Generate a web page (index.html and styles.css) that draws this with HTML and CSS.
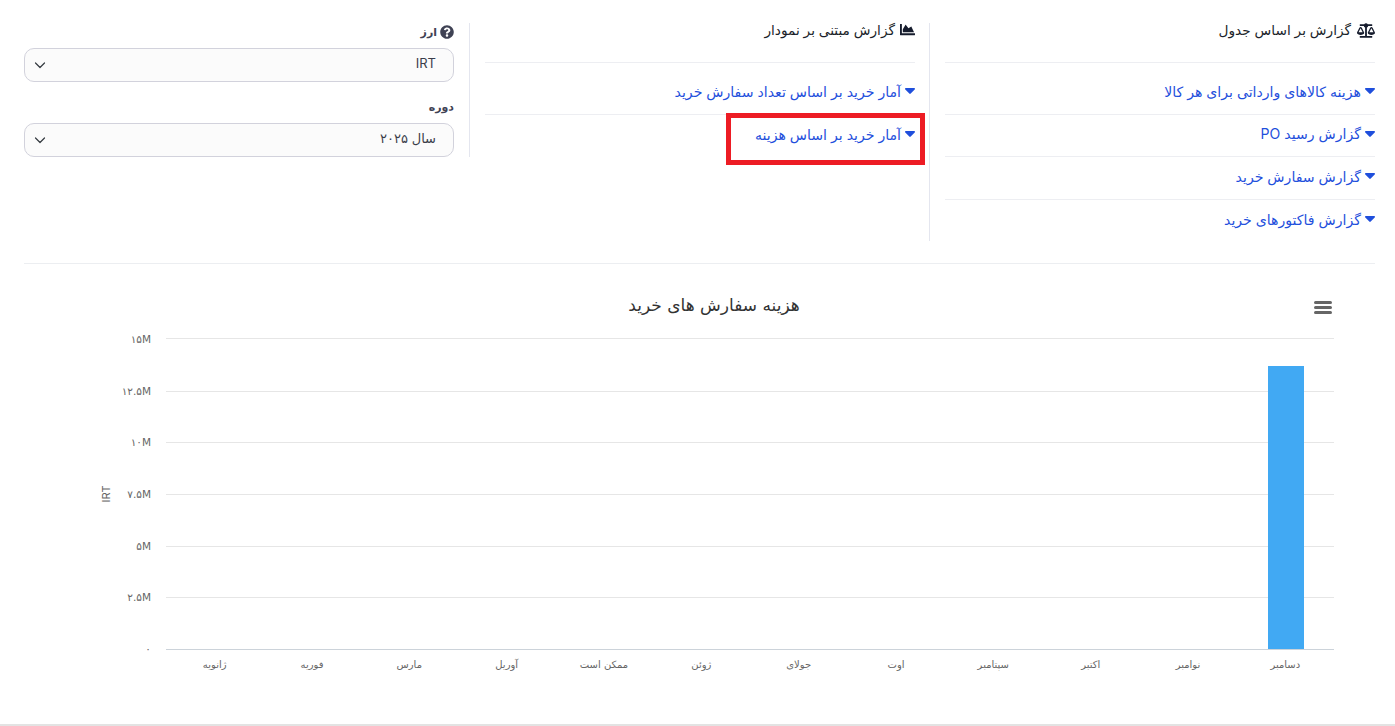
FILE: index.html
```html
<!DOCTYPE html>
<html lang="fa" dir="rtl">
<head>
<meta charset="utf-8">
<title>گزارش خرید</title>
<link rel="stylesheet" href="styles.css">
</head>
<body>
<main class="page">
  <section class="reports">
    <div class="col col-table">
      <h3 class="col-title">
        <svg class="title-icon scale" viewBox="0 0 640 512"><path d="M256 336h-.02c0-16.18 1.34-8.73-85.05-181.51-17.65-35.29-68.19-35.36-85.87 0C-2.06 328.75.02 320.33.02 336H0c0 44.18 57.31 80 128 80s128-35.82 128-80zM128 176l72 144H56l72-144zm511.98 160c0-16.18 1.34-8.73-85.05-181.51-17.65-35.29-68.19-35.36-85.87 0-87.12 174.26-85.04 165.84-85.04 181.51H384c0 44.18 57.31 80 128 80s128-35.82 128-80h-.02zM440 320l72-144 72 144H440zm88 128H352V153.25c23.51-10.29 41.16-31.48 46.39-57.25H528c8.84 0 16-7.16 16-16V48c0-8.84-7.16-16-16-16H383.64C369.04 12.68 346.09 0 320 0s-49.04 12.68-63.64 32H112c-8.84 0-16 7.16-16 16v32c0 8.84 7.16 16 16 16h129.61c5.23 25.76 22.87 46.96 46.39 57.25V448H112c-8.84 0-16 7.16-16 16v32c0 8.84 7.16 16 16 16h416c8.84 0 16-7.16 16-16v-32c0-8.84-7.16-16-16-16z"/></svg>
        <span>گزارش بر اساس جدول</span>
      </h3>
      <ul class="links">
        <li><svg class="caret" viewBox="0 0 10 6"><path d="M1 0h8c.9 0 1.3 1 .7 1.6L5.7 5.6c-.4.4-1 .4-1.4 0L.3 1.6C-.3 1 .1 0 1 0z"/></svg><a href="#">هزینه کالاهای وارداتی برای هر کالا</a></li>
        <li><svg class="caret" viewBox="0 0 10 6"><path d="M1 0h8c.9 0 1.3 1 .7 1.6L5.7 5.6c-.4.4-1 .4-1.4 0L.3 1.6C-.3 1 .1 0 1 0z"/></svg><a href="#">گزارش رسید PO</a></li>
        <li><svg class="caret" viewBox="0 0 10 6"><path d="M1 0h8c.9 0 1.3 1 .7 1.6L5.7 5.6c-.4.4-1 .4-1.4 0L.3 1.6C-.3 1 .1 0 1 0z"/></svg><a href="#">گزارش سفارش خرید</a></li>
        <li><svg class="caret" viewBox="0 0 10 6"><path d="M1 0h8c.9 0 1.3 1 .7 1.6L5.7 5.6c-.4.4-1 .4-1.4 0L.3 1.6C-.3 1 .1 0 1 0z"/></svg><a href="#">گزارش فاکتورهای خرید</a></li>
      </ul>
    </div>
    <div class="col col-chart">
      <h3 class="col-title">
        <svg class="title-icon area" viewBox="0 0 512 512"><path d="M500 384c6.6 0 12 5.4 12 12v40c0 6.6-5.4 12-12 12H12c-6.6 0-12-5.4-12-12V76c0-6.6 5.4-12 12-12h40c6.6 0 12 5.4 12 12v308h436zM372.7 159.5L288 216l-85.3-113.7c-5.1-6.8-15.5-6.3-19.9 1L96 248v104h384l-89.9-187.8c-3.2-6.5-11.4-8.7-17.4-4.7z"/></svg>
        <span>گزارش مبتنی بر نمودار</span>
      </h3>
      <ul class="links">
        <li><svg class="caret" viewBox="0 0 10 6"><path d="M1 0h8c.9 0 1.3 1 .7 1.6L5.7 5.6c-.4.4-1 .4-1.4 0L.3 1.6C-.3 1 .1 0 1 0z"/></svg><a href="#">آمار خرید بر اساس تعداد سفارش خرید</a></li>
        <li><svg class="caret" viewBox="0 0 10 6"><path d="M1 0h8c.9 0 1.3 1 .7 1.6L5.7 5.6c-.4.4-1 .4-1.4 0L.3 1.6C-.3 1 .1 0 1 0z"/></svg><a href="#">آمار خرید بر اساس هزینه</a></li>
      </ul>
      <div class="highlight"></div>
    </div>
    <div class="col col-filters">
      <label class="field-label">
        <svg class="help" viewBox="0 0 512 512"><path d="M504 256c0 136.997-111.043 248-248 248S8 392.997 8 256C8 119.083 119.043 8 256 8s248 111.083 248 248zM262.655 90c-54.497 0-89.255 22.957-116.549 63.758-3.536 5.286-2.353 12.415 2.715 16.258l34.699 26.31c5.205 3.947 12.621 3.008 16.665-2.122 17.864-22.658 30.113-35.797 57.303-35.797 20.429 0 45.698 13.148 45.698 32.958 0 14.976-12.363 22.667-32.534 33.976C247.128 238.528 216 254.941 216 296v4c0 6.627 5.373 12 12 12h56c6.627 0 12-5.373 12-12v-1.333c0-28.462 83.186-29.647 83.186-106.667 0-58.002-60.165-102-116.531-102zM256 338c-25.365 0-46 20.635-46 46 0 25.364 20.635 46 46 46s46-20.636 46-46c0-25.365-20.635-46-46-46z"/></svg>
        <span>ارز</span>
      </label>
      <div class="select">
        <span class="select-value">IRT</span>
        <svg class="chevron" viewBox="0 0 16 16"><path d="M3.5 6l4.5 4.5L12.5 6"/></svg>
      </div>
      <label class="field-label second"><span>دوره</span></label>
      <div class="select">
        <span class="select-value">سال ۲۰۲۵</span>
        <svg class="chevron" viewBox="0 0 16 16"><path d="M3.5 6l4.5 4.5L12.5 6"/></svg>
      </div>
    </div>
  </section>

  <hr class="divider">

  <svg class="chart" viewBox="0 264 1395 460">
    <text class="chart-title" x="714" y="311">هزینه سفارش های خرید</text>
    <path class="menu" d="M1315.5 302.5h15M1315.5 307.5h15M1315.5 312.5h15"/>
    <path class="grid" d="M166 338.5H1334M166 391.5H1334M166 442.5H1334M166 494.5H1334M166 546.5H1334M166 597.5H1334"/>
    <rect class="bar" x="1268" y="366" width="36" height="283"/>
    <path class="axis" d="M166 649.5H1334"/>
    <text class="y-label" x="151" y="343">۱۵M</text>
    <text class="y-label" x="151" y="395">۱۲.۵M</text>
    <text class="y-label" x="151" y="446">۱۰M</text>
    <text class="y-label" x="151" y="498">۷.۵M</text>
    <text class="y-label" x="151" y="550">۵M</text>
    <text class="y-label" x="151" y="601">۲.۵M</text>
    <text class="y-label" x="151" y="653">۰</text>
    <text class="y-title" transform="translate(110 494) rotate(-90)">IRT</text>
    <text class="x-label" x="214.7" y="668">ژانویه</text>
    <text class="x-label" x="312" y="668">فوریه</text>
    <text class="x-label" x="409.3" y="668">مارس</text>
    <text class="x-label" x="506.7" y="668">آوریل</text>
    <text class="x-label" x="604" y="668">ممکن است</text>
    <text class="x-label" x="701.3" y="668">ژوئن</text>
    <text class="x-label" x="798.7" y="668">جولای</text>
    <text class="x-label" x="896" y="668">اوت</text>
    <text class="x-label" x="993.3" y="668">سپتامبر</text>
    <text class="x-label" x="1090.7" y="668">اکتبر</text>
    <text class="x-label" x="1188" y="668">نوامبر</text>
    <text class="x-label" x="1285.3" y="668">دسامبر</text>
  </svg>
</main>
</body>
</html>
```
FILE: styles.css
```css
* { box-sizing: border-box; }
html, body { margin: 0; padding: 0; background: #fff; }
body {
  font-family: Inter, "DejaVu Sans", sans-serif;
  color: #1b1f2a;
  overflow: hidden;
}
.page {
  height: 726px;
  border-bottom: 2px solid #e3e3e3;
}
.reports {
  display: flex;
  align-items: flex-start;
  padding: 23px 20px 0 24px;
}
.col { position: relative; }
.col-table {
  width: 446px;
  height: 218px;
  padding-left: 15px;
  border-left: 1px solid #e4e6ef;
}
.col-chart {
  width: 460px;
  height: 134px;
  padding: 0 14px 0 15px;
  border-left: 1px solid #e4e6ef;
}
.col-filters {
  width: 445px;
  padding-right: 15px;
}
.col-title {
  display: flex;
  align-items: center;
  gap: 6px;
  height: 40px;
  margin: 0;
  padding-bottom: 25px;
  font-size: 13.7px;
  font-weight: 400;
  line-height: 17px;
  border-bottom: 1px solid #edeef2;
}
.title-icon { fill: #161c2d; flex: none; }
.scale { width: 18px; height: 15px; }
.area { width: 15px; height: 15px; margin-top: -2px; margin-left: -1px; }
.links {
  list-style: none;
  margin: 0;
  padding: 9px 0 0;
}
.links li {
  display: flex;
  align-items: center;
  gap: 4px;
  height: 42.5px;
  padding-bottom: 3px;
  border-bottom: 1px solid #edeef2;
  font-size: 14.1px;
}
.links li:last-child { border-bottom: 0; }
.links a { color: #1f4fdc; text-decoration: none; }
.caret { width: 10px; height: 6px; fill: #1f4fdc; flex: none; }
.highlight {
  position: absolute;
  top: 90px;
  right: 4px;
  width: 199px;
  height: 52px;
  border: 5px solid #ed1c24;
}
.field-label {
  display: flex;
  align-items: center;
  gap: 3px;
  height: 17px;
  margin-bottom: 8px;
  font-size: 11px;
  font-weight: 700;
  color: #3f4254;
}
.field-label.second { margin-top: 16px; margin-bottom: 8px; }
.help { width: 14px; height: 14px; fill: #3f4254; flex: none; }
.select {
  display: flex;
  align-items: center;
  justify-content: space-between;
  height: 34px;
  padding: 0 17px 0 7px;
  background: #fbfbfb;
  border: 1px solid #d2d2dc;
  border-radius: 10px;
  font-size: 13px;
  color: #3a3d4a;
}
.select-value { margin-bottom: 4px; }
.chevron {
  width: 16px;
  height: 16px;
  fill: none;
  stroke: #343a40;
  stroke-width: 1.2;
  stroke-linecap: round;
  stroke-linejoin: round;
}
.divider {
  height: 1px;
  margin: 0 20px 0 24px;
  border: 0;
  background: #eceef1;
  position: relative;
  top: 22px;
}
.chart {
  display: block;
  width: 1395px;
  height: 460px;
  margin-top: 22px;
  direction: ltr;
  font-family: "DejaVu Sans", sans-serif;
}
.chart-title { font-size: 17px; fill: #333; text-anchor: middle; }
.menu { fill: none; stroke: #666; stroke-width: 3; stroke-linecap: round; }
.grid { fill: none; stroke: #e6e6e6; stroke-width: 1; }
.axis { fill: none; stroke: #ccd3da; stroke-width: 1; }
.bar { fill: #41a9f3; }
.y-label { font-size: 10.5px; fill: #666; text-anchor: end; }
.y-title { font-size: 11px; fill: #666; text-anchor: middle; font-family: Inter, sans-serif; }
.x-label { font-size: 10px; fill: #666; text-anchor: middle; }
```
